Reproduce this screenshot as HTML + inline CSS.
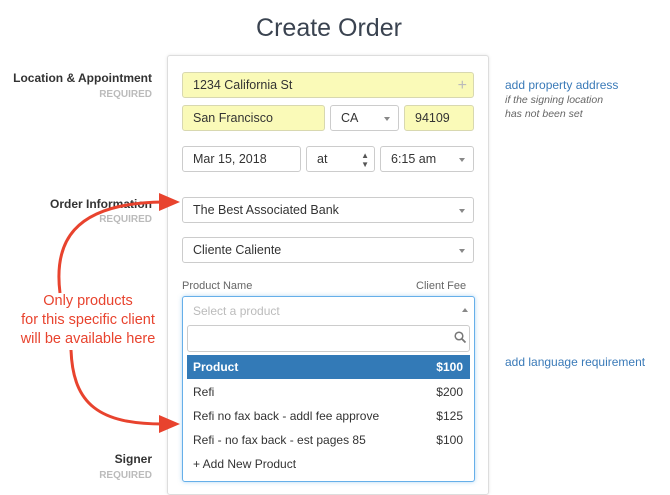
<!DOCTYPE html>
<html><head><meta charset="utf-8"><style>
*{box-sizing:border-box;margin:0;padding:0}
body{width:670px;height:485px;overflow:hidden;background:#fff;font-family:"Liberation Sans",sans-serif;position:relative;color:#333}
.a{position:absolute}
h1{position:absolute;left:0;width:658px;text-align:center;top:14px;font-weight:normal;font-size:25px;color:#3a4350}
.card{left:167px;top:55px;width:322px;height:440px;border:1px solid #ddd;border-radius:3px;box-shadow:0 0 3px rgba(0,0,0,.1)}
.f{position:absolute;height:26px;border:1px solid #ccc;border-radius:3px;font-size:12.5px;line-height:25px;padding-left:10px;color:#333;background:#fff}
.y{background:#fafab8;border-color:#d8d8b0}
.dd::after{content:"";position:absolute;right:8px;top:11px;border:3px solid transparent;border-top:4px solid #888}
.lbl{font-size:12px;font-weight:bold;color:#333;text-align:right;right:518px}
.req{font-size:10px;font-weight:bold;color:#bbb;text-align:right;right:518px}
.opt{position:absolute;left:187px;width:283px;height:24px;font-size:12px;line-height:25px;padding:0 7px 0 6px;display:flex;justify-content:space-between}
</style></head><body>
<h1>Create Order</h1>
<div class="a card"></div>
<div class="a lbl" style="top:71px">Location &amp; Appointment</div>
<div class="a req" style="top:89px">REQUIRED</div>
<div class="a lbl" style="top:197px">Order Information</div>
<div class="a req" style="top:214px">REQUIRED</div>
<div class="a lbl" style="top:452px">Signer</div>
<div class="a req" style="top:470px">REQUIRED</div>

<div class="f y" style="left:182px;top:72px;width:292px">1234 California St<span style="position:absolute;right:6px;top:0;color:#bbb;font-size:16px">+</span></div>
<div class="f y" style="left:182px;top:105px;width:143px">San Francisco</div>
<div class="f dd" style="left:330px;top:105px;width:69px">CA</div>
<div class="f y" style="left:404px;top:105px;width:70px">94109</div>
<div class="f" style="left:182px;top:146px;width:119px">Mar 15, 2018</div>
<div class="f" style="left:306px;top:146px;width:69px">at<span style="position:absolute;right:5px;top:0;font-size:8px;line-height:9px;padding-top:4px;color:#555">▲<br>▼</span></div>
<div class="f dd" style="left:380px;top:146px;width:94px">6:15 am</div>
<div class="f dd" style="left:182px;top:197px;width:292px">The Best Associated Bank</div>
<div class="f dd" style="left:182px;top:237px;width:292px">Cliente Caliente</div>
<div class="a" style="left:182px;top:280px;font-size:11px;color:#666">Product Name</div>
<div class="a" style="left:416px;top:280px;font-size:11px;color:#666">Client Fee</div>

<div class="a" style="left:182px;top:296px;width:293px;height:186px;border:1px solid #66afe9;border-radius:3px;box-shadow:0 0 4px rgba(102,175,233,.5);background:#fff"></div>
<div class="a" style="left:193px;top:304px;font-size:12px;color:#bbb">Select a product</div>
<div class="a" style="left:462px;top:308px;border:3px solid transparent;border-bottom:4px solid #888;border-top:0"></div>
<div class="a" style="left:187px;top:325px;width:283px;height:27px;border:1px solid #ccc;border-radius:3px"></div>
<svg class="a" style="left:454px;top:331px" width="13" height="13" viewBox="0 0 13 13"><circle cx="5" cy="5" r="3.8" fill="none" stroke="#777" stroke-width="1.5"/><path d="M8 8 L11.5 11.5" stroke="#777" stroke-width="1.8"/></svg>
<div class="opt" style="top:355px;background:#337ab7;color:#fff;font-weight:bold"><span>Product</span><span>$100</span></div>
<div class="opt" style="top:380px"><span>Refi</span><span>$200</span></div>
<div class="opt" style="top:404px"><span>Refi no fax back - addl fee approve</span><span>$125</span></div>
<div class="opt" style="top:428px"><span>Refi - no fax back - est pages 85</span><span>$100</span></div>
<div class="opt" style="top:452px"><span>+ Add New Product</span></div>

<div class="a" style="left:505px;top:78px;font-size:12px;color:#3a7ab8">add property address</div>
<div class="a" style="left:505px;top:93px;font-size:10.5px;color:#666;font-style:italic;line-height:14px">if the signing location<br>has not been set</div>
<div class="a" style="left:505px;top:355px;font-size:12px;color:#3a7ab8">add language requirement</div>

<svg class="a" style="left:0;top:0" width="670" height="485">
<path d="M60 293 C54 245 70 203 163 202" fill="none" stroke="#e8432e" stroke-width="3"/>
<path d="M159 193 L180 202 L159 211 Z" fill="#e8432e"/>
<path d="M71 350 C73 405 100 424 163 424" fill="none" stroke="#e8432e" stroke-width="3"/>
<path d="M159 415 L180 424 L159 433 Z" fill="#e8432e"/>
</svg>
<div class="a" style="left:8px;top:292px;width:160px;text-align:center;font-size:14.5px;color:#e8432e;line-height:19px">Only products<br>for this specific client<br>will be available here</div>
</body></html>
